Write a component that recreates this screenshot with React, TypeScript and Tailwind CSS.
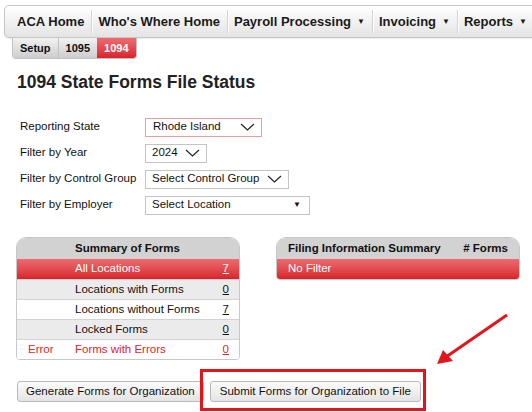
import React from "react"

const NAV = [
  { label: "ACA Home", caret: false },
  { label: "Who's Where Home", caret: false },
  { label: "Payroll Processing", caret: true },
  { label: "Invoicing", caret: true },
  { label: "Reports", caret: true },
]

const FILTERS = [
  { label: "Reporting State", value: "Rhode Island", w: "w-[117px]", chevron: true, hot: true },
  { label: "Filter by Year", value: "2024", w: "w-[62px]", chevron: true, hot: false },
  { label: "Filter by Control Group", value: "Select Control Group", w: "w-[144px]", chevron: true, hot: false },
  { label: "Filter by Employer", value: "Select Location", w: "w-[165px]", chevron: false, hot: false },
]

const SUMMARY = [
  { tag: "", label: "All Locations", count: "7", kind: "active" },
  { tag: "", label: "Locations with Forms", count: "0", kind: "gray" },
  { tag: "", label: "Locations without Forms", count: "7", kind: "white" },
  { tag: "", label: "Locked Forms", count: "0", kind: "gray" },
  { tag: "Error", label: "Forms with Errors", count: "0", kind: "error" },
]

function Chevron() {
  return (
    <svg width="15" height="8" viewBox="0 0 15 8" className="shrink-0">
      <path d="M1 1 L7.5 7 L14 1" fill="none" stroke="#222" strokeWidth="1.2" />
    </svg>
  )
}

export default function App() {
  return (
    <div className="relative w-[532px] h-[412px] overflow-hidden bg-white text-[#111]" style={{ fontFamily: '"Liberation Sans", Arial, sans-serif' }}>
      {/* top nav */}
      <div className="mt-[5px] ml-[4px] w-[560px] h-[33px] flex items-center pl-[6px] border border-[#c6c6c6] rounded-l-[5px] bg-linear-to-b from-white to-[#e4e4e4] shadow-[0_1px_1px_rgba(0,0,0,.08)]">
        {NAV.map((n) => (
          <React.Fragment key={n.label}>
            <div className="flex items-center gap-[6px] pl-[6px] pr-[7px] text-[13px] font-bold text-[#1a1a1a]">
              <span>{n.label}</span>
              {n.caret && <span className="text-[8px] leading-none">▼</span>}
            </div>
            <span className="w-px h-[23px] bg-[#d3d3d3] shadow-[1px_0_0_#fff]" />
          </React.Fragment>
        ))}
      </div>

      {/* sub tabs */}
      <div className="ml-[12px] flex h-[21px] w-max rounded-b-[4px] overflow-hidden border-x border-b border-[#c2c2c2] text-[11px] font-bold">
        <div className="px-[7px] flex items-center bg-linear-to-b from-[#f2f2f2] to-[#cdcdcd] border-r border-[#c2c2c2]">Setup</div>
        <div className="px-[7px] flex items-center bg-linear-to-b from-[#f2f2f2] to-[#cdcdcd]">1095</div>
        <div className="px-[7px] flex items-center text-white bg-linear-to-b from-[#ee6a70] to-[#d8202a]">1094</div>
      </div>

      <div className="mt-[13px] pl-[17px] h-[20px] leading-[20px] text-[17.5px] font-bold text-[#222]">1094 State Forms File Status</div>

      {/* filters */}
      <div className="mt-[22px] pl-[20px] text-[11.5px]">
        {FILTERS.map((f) => (
          <div key={f.label} className="h-[26px] flex items-center">
            <div className="w-[125px]">{f.label}</div>
            <div className={`${f.w} h-[19px] flex items-center justify-between bg-white border ${f.hot ? "border-[#f09a9a] pl-[7px] pr-[6px]" : "border-[#c4c4c4] pl-[6px] pr-[6px]"}`}>
              <span>{f.value}</span>
              {f.chevron ? <Chevron /> : <span className="text-[8px] pr-[2px]">▼</span>}
            </div>
          </div>
        ))}
      </div>

      {/* tables */}
      <div className="mt-[19px] flex text-[11.5px]">
        <div className="ml-[16px] w-[224px] border border-[#c8c8c8] rounded-t-[10px] rounded-b-[4px] overflow-hidden">
          <div className="h-[21px] flex items-center bg-[#d2d2d2] font-bold">
            <div className="w-[58px]" />
            <div>Summary of Forms</div>
          </div>
          {SUMMARY.map((r) => {
            const bg =
              r.kind === "active"
                ? "bg-linear-to-b from-[#ec6a70] to-[#d8202a] text-white"
                : r.kind === "gray"
                ? "bg-[#ebebeb] border-t border-[#d2d2d2]"
                : r.kind === "error"
                ? "bg-white border-t border-[#d2d2d2] text-[#e0242c]"
                : "bg-white border-t border-[#d2d2d2]"
            return (
              <div key={r.label} className={`h-[20px] flex items-center ${bg}`}>
                <div className="w-[58px] pl-[11px]">{r.tag}</div>
                <div className="flex-1">{r.label}</div>
                <div className="pr-[10px] underline">{r.count}</div>
              </div>
            )
          })}
        </div>

        <div className="ml-[36px] w-[244px] self-start border border-[#c8c8c8] rounded-t-[10px] rounded-b-[4px] overflow-hidden">
          <div className="h-[21px] flex items-center justify-between bg-[#d2d2d2] font-bold pl-[11px] pr-[11px]">
            <span>Filing Information Summary</span>
            <span># Forms</span>
          </div>
          <div className="h-[20px] flex items-center pl-[11px] text-white bg-linear-to-b from-[#ec6a70] to-[#d8202a]">No Filter</div>
        </div>
      </div>

      {/* buttons */}
      <div className="mt-[21px] ml-[17px] flex gap-[6px] text-[11.5px]">
        <button className="h-[21px] px-[8px] border border-[#b9b9b9] rounded-[3px] bg-linear-to-b from-[#fbfbfb] to-[#e4e4e4] text-[#111]">Generate Forms for Organization</button>
        <button className="h-[21px] px-[9px] border border-[#b9b9b9] rounded-[3px] bg-linear-to-b from-[#fbfbfb] to-[#e4e4e4] text-[#111]">Submit Forms for Organization to File</button>
      </div>

      {/* annotation */}
      <div className="absolute left-[200px] top-[369px] w-[226px] h-[42px] border-[3px] border-[#e3141c]" />
      <svg className="absolute left-0 top-0" width="532" height="412" viewBox="0 0 532 412">
        <line x1="507" y1="315" x2="446" y2="357" stroke="#e3141c" strokeWidth="3" />
        <polygon points="437,364 443,350 453,361" fill="#e3141c" />
      </svg>
    </div>
  )
}
